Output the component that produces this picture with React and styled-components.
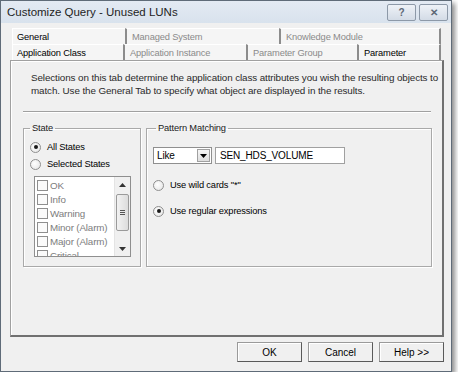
import styled, { createGlobalStyle } from "styled-components";

const GlobalStyle = createGlobalStyle`
  body {
    margin: 0;
    background: #ffffff;
    font-family: "Liberation Sans", Arial, sans-serif;
  }
`;

const Window = styled.div`
  width: 450px;
  height: 370px;
  border: 1px solid #5f6b78;
  background: #f0f0f0;
  box-shadow: 3px 3px 5px rgba(0, 0, 0, 0.45);
  display: flex;
  flex-direction: column;
  font-size: 9.3px;
  letter-spacing: -0.15px;
  color: #000;
`;

const TitleBar = styled.div`
  height: 22px;
  flex: none;
  display: flex;
  align-items: center;
  padding: 0 3px 0 6px;
  background: linear-gradient(#e3eaf3, #d8e2ed);
`;

const Title = styled.div`
  flex: 1;
  font-size: 11.5px;
  letter-spacing: 0;
  color: #1e1e1e;
`;

const CapButton = styled.div`
  width: 27px;
  height: 15px;
  margin-left: 3px;
  border: 1px solid #8d99a8;
  border-radius: 2px;
  background: linear-gradient(#eef2f7, #d3dbe6);
  display: flex;
  align-items: center;
  justify-content: center;
  color: #5c6876;
  font-size: 10px;
  font-weight: bold;
`;

const Body = styled.div`
  flex: 1;
  display: flex;
  flex-direction: column;
  padding: 5px 7px 0 9px;
`;

const TabRow = styled.div`
  display: flex;
  margin-left: 2px;
  height: 16px;
`;

const Tab = styled.div`
  width: ${(p) => p.$w}px;
  box-sizing: border-box;
  height: 16px;
  display: flex;
  align-items: center;
  padding-left: ${(p) => (p.$first ? 4 : 5)}px;
  background: #f5f5f5;
  border-top: 1px solid #ffffff;
  border-left: ${(p) => (p.$first ? "1px solid #ffffff" : "2px solid #8c8c8c")};
  border-right: ${(p) => (p.$last ? "2px solid #8c8c8c" : "none")};
  color: ${(p) => (p.$active ? "#000" : "#8a8a8a")};
`;

const Panel = styled.div`
  height: 277px;
  box-sizing: border-box;
  border: 1px solid #a0a0a0;
  border-right: 2px solid #707070;
  border-bottom: 2px solid #707070;
  box-shadow: inset 1px 1px #ffffff;
  display: flex;
  flex-direction: column;
  padding: 10px 0 0 12px;
`;

const Description = styled.p`
  margin: 0 0 0 8px;
  font-size: 9.85px;
  letter-spacing: -0.1px;
  line-height: 13px;
  color: #2a2a2a;
`;

const Rule = styled.div`
  height: 0;
  margin: 14px 11px 9px 0;
  border-top: 1px solid #a0a0a0;
  border-bottom: 1px solid #ffffff;
`;

const Groups = styled.div`
  display: flex;
  gap: 5px;
  height: 145px;
`;

const Group = styled.fieldset`
  margin: 0;
  width: ${(p) => p.$w}px;
  box-sizing: border-box;
  border: 1px solid #a9a9a9;
  box-shadow: inset 1px 1px #ffffff, 1px 1px #ffffff;
  padding: 0 0 0 6px;
  display: flex;
  flex-direction: column;
`;

const Legend = styled.legend`
  padding: 0 2px;
  margin-left: ${(p) => p.$offset}px;
  color: #1a1a1a;
  line-height: 12px;
`;

const RadioRow = styled.label`
  display: flex;
  align-items: center;
  gap: 6px;
  height: 14px;
  margin-top: ${(p) => p.$top}px;
`;

const Radio = styled.span`
  width: 9px;
  height: 9px;
  border-radius: 50%;
  border: 1px solid #8f8f8f;
  background: radial-gradient(circle at 40% 40%, #ffffff, #e2e2e2);
  display: flex;
  align-items: center;
  justify-content: center;
  &::after {
    content: "";
    width: 4px;
    height: 4px;
    border-radius: 50%;
    background: ${(p) => (p.$on ? "#1a1a1a" : "transparent")};
  }
`;

const ListBox = styled.div`
  margin: 5px 0 0 4px;
  width: 97px;
  height: 81px;
  box-sizing: border-box;
  border: 1px solid #8f8f8f;
  background: #ffffff;
  display: flex;
  overflow: hidden;
`;

const Items = styled.div`
  flex: 1;
  padding: 1px 0 0 2px;
  overflow: hidden;
`;

const Item = styled.div`
  display: flex;
  align-items: center;
  gap: 2px;
  height: 14px;
  font-size: 9.8px;
  color: #7d7d7d;
  white-space: nowrap;
`;

const Check = styled.span`
  width: 9px;
  height: 9px;
  flex: none;
  border: 1px solid #8e8e8e;
  background: #fafafa;
`;

const ScrollBar = styled.div`
  width: 15px;
  background: #f0f0f0;
  border-left: 1px solid #e4e4e4;
  display: flex;
  flex-direction: column;
  align-items: center;
`;

const Arrow = styled.div`
  height: 15px;
  display: flex;
  align-items: center;
  justify-content: center;
`;

const Track = styled.div`
  flex: 1;
`;

const Thumb = styled.div`
  width: 13px;
  height: 37px;
  margin-top: 2px;
  box-sizing: border-box;
  border: 1px solid #9a9a9a;
  border-radius: 2px;
  background: linear-gradient(90deg, #f2f2f2, #dcdcdc);
  display: flex;
  flex-direction: column;
  align-items: center;
  justify-content: center;
  gap: 1px;
  & > span {
    width: 5px;
    height: 1px;
    background: #555;
  }
`;

const InputRow = styled.div`
  display: flex;
  gap: 3px;
  margin: 13px 0 0 0;
`;

const Combo = styled.div`
  width: 59px;
  height: 17px;
  box-sizing: border-box;
  border: 1px solid #8f8f8f;
  background: #ffffff;
  display: flex;
  align-items: center;
  padding: 0 1px 0 3px;
  font-size: 10px;
  & > span:first-child {
    flex: 1;
  }
`;

const DropBtn = styled.span`
  width: 13px;
  height: 13px;
  box-sizing: border-box;
  border: 1px solid #a0a0a0;
  background: linear-gradient(#f6f6f6, #dedede);
  display: flex;
  align-items: center;
  justify-content: center;
`;

const TextBox = styled.div`
  width: 130px;
  height: 17px;
  box-sizing: border-box;
  border: 1px solid #a0a0a0;
  background: #ffffff;
  display: flex;
  align-items: center;
  padding-left: 4px;
  font-size: 10px;
`;

const Footer = styled.div`
  flex: 1;
  display: flex;
  justify-content: flex-end;
  align-items: flex-start;
  gap: 6px;
  padding: 5px 0 0 0;
`;

const Button = styled.button`
  width: 65px;
  height: 20px;
  box-sizing: border-box;
  border: 1px solid #9a9a9a;
  border-right-color: #5a5a5a;
  border-bottom-color: #5a5a5a;
  box-shadow: inset 1px 1px #ffffff;
  background: #f0f0f0;
  font-family: inherit;
  font-size: 10px;
  color: #000;
  padding: 0;
`;

const UpTri = () => (
  <svg width="7" height="4" viewBox="0 0 7 4">
    <path d="M3.5 0 L7 4 L0 4 Z" fill="#333" />
  </svg>
);

const DownTri = ({ c = "#333" }) => (
  <svg width="7" height="4" viewBox="0 0 7 4">
    <path d="M0 0 L7 0 L3.5 4 Z" fill={c} />
  </svg>
);

const row1 = [
  { label: "General", w: 113, active: true },
  { label: "Managed System", w: 154 },
  { label: "Knowledge Module", w: 162 },
];
const row2 = [
  { label: "Application Class", w: 111, active: true },
  { label: "Application Instance", w: 123 },
  { label: "Parameter Group", w: 111 },
  { label: "Parameter", w: 84, active: true },
];
const states = ["OK", "Info", "Warning", "Minor (Alarm)", "Major (Alarm)", "Critical"];

function TabStrip({ tabs }) {
  return (
    <TabRow>
      {tabs.map((t, i) => (
        <Tab
          key={t.label}
          $w={t.w}
          $first={i === 0}
          $last={i === tabs.length - 1}
          $active={t.active}
        >
          {t.label}
        </Tab>
      ))}
    </TabRow>
  );
}

export default function App() {
  return (
    <>
      <GlobalStyle />
      <Window>
        <TitleBar>
          <Title>Customize Query - Unused LUNs</Title>
          <CapButton>?</CapButton>
          <CapButton>✕</CapButton>
        </TitleBar>
        <Body>
          <TabStrip tabs={row1} />
          <TabStrip tabs={row2} />
          <Panel>
            <Description>
              Selections on this tab determine the application class attributes you wish the
              resulting objects to match. Use the General Tab to specify what object are
              displayed in the results.
            </Description>
            <Rule />
            <Groups>
              <Group $w={118}>
                <Legend $offset={0}>State</Legend>
                <RadioRow $top={6}>
                  <Radio $on />
                  All States
                </RadioRow>
                <RadioRow $top={3}>
                  <Radio />
                  Selected States
                </RadioRow>
                <ListBox>
                  <Items>
                    {states.map((s) => (
                      <Item key={s}>
                        <Check />
                        {s}
                      </Item>
                    ))}
                  </Items>
                  <ScrollBar>
                    <Arrow>
                      <UpTri />
                    </Arrow>
                    <Thumb>
                      <span />
                      <span />
                      <span />
                    </Thumb>
                    <Track />
                    <Arrow>
                      <DownTri />
                    </Arrow>
                  </ScrollBar>
                </ListBox>
              </Group>
              <Group $w={286}>
                <Legend $offset={3}>Pattern Matching</Legend>
                <InputRow>
                  <Combo>
                    <span>Like</span>
                    <DropBtn>
                      <DownTri c="#000" />
                    </DropBtn>
                  </Combo>
                  <TextBox>SEN_HDS_VOLUME</TextBox>
                </InputRow>
                <RadioRow $top={14}>
                  <Radio />
                  Use wild cards "*"
                </RadioRow>
                <RadioRow $top={12}>
                  <Radio $on />
                  Use regular expressions
                </RadioRow>
              </Group>
            </Groups>
          </Panel>
          <Footer>
            <Button>OK</Button>
            <Button>Cancel</Button>
            <Button>Help &gt;&gt;</Button>
          </Footer>
        </Body>
      </Window>
    </>
  );
}
